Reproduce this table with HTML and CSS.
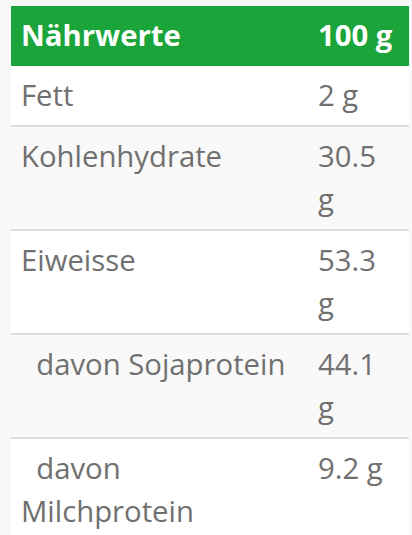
FILE: index.html
```html
<!DOCTYPE html>
<html lang="de">
<head>
<meta charset="utf-8">
<link rel="stylesheet" href="styles.css">
</head>
<body>
<div class="wrap">
<table class="nutri">
  <colgroup><col class="c-name"><col class="c-val"></colgroup>
  <thead>
    <tr><th class="name">Nährwerte</th><th class="val">100 g</th></tr>
  </thead>
  <tbody>
    <tr><td class="name">Fett</td><td class="val">2 g</td></tr>
    <tr><td class="name">Kohlenhydrate</td><td class="val">30.5 g</td></tr>
    <tr><td class="name">Eiweisse</td><td class="val">53.3 g</td></tr>
    <tr><td class="name">&nbsp;&nbsp;davon Sojaprotein</td><td class="val">44.1 g</td></tr>
    <tr><td class="name">&nbsp;&nbsp;davon Milchprotein</td><td class="val">9.2 g</td></tr>
  </tbody>
</table>
</div>
</body>
</html>
```
FILE: styles.css
```css
html, body {
  margin: 0;
  background: #f8f8f8;
}
.wrap {
  padding: 6px 3px 0 11px;
}
.nutri {
  width: 398px;
  border-collapse: collapse;
  table-layout: fixed;
  font-family: "Open Sans", sans-serif;
  font-size: 29.3px;
  line-height: 43px;
  color: #707070;
}
.c-name { width: 297px; }
.c-val { width: 101px; }
.nutri th {
  background: #1ba43a;
  color: #fff;
  font-weight: 700;
  text-align: left;
  padding: 8px 18px 9px 10px;
  white-space: nowrap;
}
.nutri td {
  padding: 8px 18px 8px 10px;
  vertical-align: top;
  border-bottom: 2px solid #dedede;
  background: #fff;
}
.nutri th.val {
  padding-right: 0;
}
.nutri td.val {
  padding-right: 20px;
}
.nutri tbody tr:nth-child(even) td {
  background: #f9f9f9;
}
```
